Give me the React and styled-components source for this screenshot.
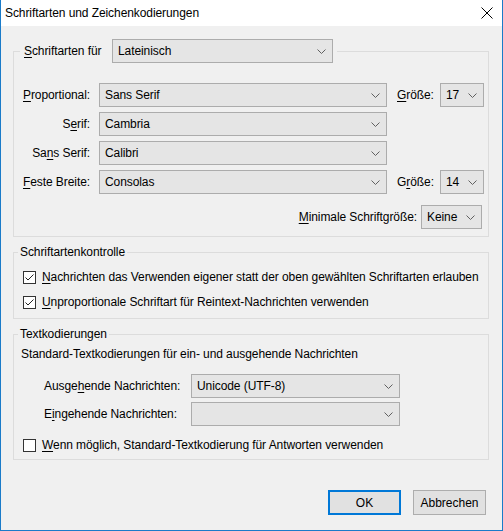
import React from "react";
import styled, { createGlobalStyle, css } from "styled-components";

const GlobalStyle = createGlobalStyle`
  html, body {
    margin: 0;
    padding: 0;
    background: #f0f0f0;
  }
  body {
    font-family: "Liberation Sans", Arial, sans-serif;
    font-size: 12px;
    letter-spacing: -0.08px;
    color: #000;
  }
`;

const Window = styled.div`
  box-sizing: border-box;
  width: 503px;
  height: 531px;
  border: 1px solid #1a7bc9;
  border-top: none;
  background: #f0f0f0;
  display: flex;
  flex-direction: column;
`;

const TitleBar = styled.div`
  height: 26px;
  flex-shrink: 0;
  background: #fff;
  display: flex;
  align-items: center;
  justify-content: space-between;
  padding: 0 9px 0 4px;
`;

const Title = styled.span`
  font-size: 12px;
`;

const Body = styled.div`
  display: flex;
  flex-direction: column;
  gap: 7px;
  padding: 13px 13px 0 12px;
`;

const Group = styled.fieldset`
  margin: 0;
  padding: 0;
  min-width: 0;
  border: 1px solid #dcdcdc;
`;

const Legend = styled.legend`
  margin-left: ${(p) => (p.$wide ? 6 : 4)}px;
  padding: 0 ${(p) => (p.$wide ? "4px 0 4px" : "2px")};
  line-height: 16px;
  ${(p) =>
    p.$wide &&
    css`
      display: flex;
      align-items: center;
    `}
`;

const Content = styled.div`
  display: flex;
  flex-direction: column;
  gap: ${(p) => p.$gap || 0}px;
  padding: ${(p) => p.$pad};
`;

const Row = styled.div`
  display: flex;
  align-items: center;
  justify-content: ${(p) => (p.$end ? "flex-end" : "flex-start")};
  margin-top: ${(p) => p.$top || 0}px;
  padding-left: ${(p) => p.$indent || 0}px;
  padding-right: ${(p) => p.$right || 0}px;
`;

const Label = styled.span`
  width: ${(p) => (p.$w ? `${p.$w}px` : "auto")};
  flex-shrink: 0;
  text-align: ${(p) => (p.$right ? "right" : "left")};
  margin-left: ${(p) => p.$ml || 0}px;
  margin-right: ${(p) => p.$mr || 0}px;
  white-space: nowrap;
`;

const U = styled.span`
  text-decoration: underline;
  text-underline-offset: 2px;
`;

const SelectBox = styled.div`
  box-sizing: border-box;
  width: ${(p) => p.$w}px;
  height: 24px;
  flex-shrink: 0;
  display: flex;
  align-items: center;
  justify-content: space-between;
  padding: 0 6px 0 5px;
  background: #e5e5e5;
  border: 1px solid #acacac;
`;

const Chevron = styled.svg`
  flex-shrink: 0;
  margin-left: 4px;
`;

const Select = ({ w, value }) => (
  <SelectBox $w={w}>
    <span>{value}</span>
    <Chevron width="9" height="5" viewBox="0 0 9 5">
      <polyline points="0.5,0.5 4.5,4.5 8.5,0.5" fill="none" stroke="#606060" strokeWidth="1" />
    </Chevron>
  </SelectBox>
);

const CheckRow = styled.label`
  display: flex;
  align-items: center;
  height: 16px;
  padding-left: 9px;
`;

const Box = styled.span`
  box-sizing: border-box;
  width: 13px;
  height: 13px;
  margin-right: 6px;
  flex-shrink: 0;
  background: #fff;
  border: 1px solid #333;
  display: flex;
  align-items: center;
  justify-content: center;
`;

const Check = ({ checked, children }) => (
  <CheckRow>
    <Box>
      {checked && (
        <svg width="11" height="11" viewBox="0 0 11 11">
          <polyline points="1.5,5.5 4,8 9.5,2.5" fill="none" stroke="#222" strokeWidth="1" />
        </svg>
      )}
    </Box>
    <span>{children}</span>
  </CheckRow>
);

const Text = styled.div`
  line-height: 16px;
  padding-left: 7px;
`;

const ButtonRow = styled.div`
  display: flex;
  justify-content: flex-end;
  gap: 12px;
  margin-top: 23px;
  padding-right: 3px;
`;

const Button = styled.button`
  box-sizing: border-box;
  width: 73px;
  height: 25px;
  font: inherit;
  color: #000;
  background: #e1e1e1;
  border: 1px solid #adadad;
  padding: 0;
  ${(p) =>
    p.$primary &&
    css`
      border: 2px solid #0078d7;
    `}
`;

export default function App() {
  return (
    <>
      <GlobalStyle />
      <Window>
        <TitleBar>
          <Title>Schriftarten und Zeichenkodierungen</Title>
          <svg width="12" height="12" viewBox="0 0 12 12">
            <path d="M0.5 0.5 L11.5 11.5 M11.5 0.5 L0.5 11.5" stroke="#000" strokeWidth="1" />
          </svg>
        </TitleBar>
        <Body>
          <Group>
            <Legend $wide>
              <Label $w={88}>
                <U>S</U>chriftarten für
              </Label>
              <Select w={221} value="Lateinisch" />
            </Legend>
            <Content $gap={5} $pad="20px 0 7px 0">
              <Row>
                <Label $w={76} $right $mr={9}>
                  <U>P</U>roportional:
                </Label>
                <Select w={288} value="Sans Serif" />
                <Label $w={43} $ml={10}>
                  <U>G</U>röße:
                </Label>
                <Select w={44} value="17" />
              </Row>
              <Row>
                <Label $w={76} $right $mr={9}>
                  S<U>e</U>rif:
                </Label>
                <Select w={288} value="Cambria" />
              </Row>
              <Row>
                <Label $w={76} $right $mr={9}>
                  Sa<U>n</U>s Serif:
                </Label>
                <Select w={288} value="Calibri" />
              </Row>
              <Row>
                <Label $w={76} $right $mr={9}>
                  <U>F</U>este Breite:
                </Label>
                <Select w={288} value="Consolas" />
                <Label $w={43} $ml={10}>
                  G<U>r</U>öße:
                </Label>
                <Select w={44} value="14" />
              </Row>
              <Row $end $top={6} $right={6}>
                <Label $mr={4}>
                  <U>M</U>inimale Schriftgröße:
                </Label>
                <Select w={61} value="Keine" />
              </Row>
            </Content>
          </Group>

          <Group>
            <Legend>Schriftartenkontrolle</Legend>
            <Content $gap={9} $pad="9px 0 8px 0">
              <Check checked>
                <U>N</U>achrichten das Verwenden eigener statt der oben gewählten Schriftarten erlauben
              </Check>
              <Check checked>
                <U>U</U>nproportionale Schriftart für Reintext-Nachrichten verwenden
              </Check>
            </Content>
          </Group>

          <Group>
            <Legend>Textkodierungen</Legend>
            <Content $pad="4px 0 6px 0">
              <Text>Standard-Textkodierungen für ein- und ausgehende Nachrichten</Text>
              <Row $top={12} $indent={30}>
                <Label $w={147}>
                  Ausge<U>h</U>ende Nachrichten:
                </Label>
                <Select w={209} value="Unicode (UTF-8)" />
              </Row>
              <Row $top={4} $indent={30}>
                <Label $w={147}>
                  E<U>i</U>ngehende Nachrichten:
                </Label>
                <Select w={209} value="" />
              </Row>
              <Row $top={11}>
                <Check>
                  <U>W</U>enn möglich, Standard-Textkodierung für Antworten verwenden
                </Check>
              </Row>
            </Content>
          </Group>

          <ButtonRow>
            <Button $primary>OK</Button>
            <Button>Abbrechen</Button>
          </ButtonRow>
        </Body>
      </Window>
    </>
  );
}
